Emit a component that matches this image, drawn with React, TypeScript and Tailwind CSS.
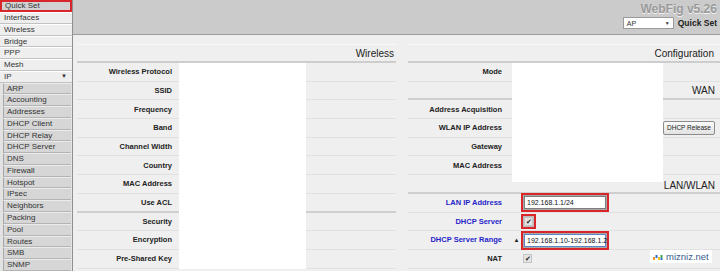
import type { ReactNode } from 'react'

const topItems = ['Interfaces', 'Wireless', 'Bridge', 'PPP', 'Mesh']
const subItems = [
  'ARP', 'Accounting', 'Addresses', 'DHCP Client', 'DHCP Relay', 'DHCP Server', 'DNS', 'Firewall',
  'Hotspot', 'IPsec', 'Neighbors', 'Packing', 'Pool', 'Routes', 'SMB', 'SNMP',
]

const leftRows = [
  'Wireless Protocol', 'SSID', 'Frequency', 'Band', 'Channel Width', 'Country',
  'MAC Address', 'Use ACL', 'Security', 'Encryption', 'Pre-Shared Key',
]

function Sidebar() {
  return (
    <div className="w-[73px] shrink-0 border-r border-[#8f8f8f] bg-[#e2e2e2] text-[8px] text-[#333]">
      <div className="h-[12px] border-2 border-[#d8262b] bg-[#d2d2d2] pl-[3px] leading-[8px]">Quick Set</div>
      {topItems.map((t) => (
        <div key={t} className="h-[11.77px] border-t border-white border-b border-b-[#c2c2c2] bg-[#eeeeee] pl-[4px] leading-[9px]">
          {t}
        </div>
      ))}
      <div className="h-[11.77px] border-t border-white border-b border-b-[#c2c2c2] bg-[#eeeeee] pl-[4px] pr-[5px] leading-[9px] flex justify-between">
        <span>IP</span>
        <span className="text-[6px]">▼</span>
      </div>
      {subItems.map((t) => (
        <div key={t} className="h-[11.77px] ml-[3px] mr-[1px] border-l border-l-[#a8a8a8] border-t border-t-[#ececec] border-b border-b-[#b4b4b4] bg-[#d6d6d6] pl-[3px] leading-[9px]">
          {t}
        </div>
      ))}
    </div>
  )
}

function Header() {
  return (
    <div className="h-[35px] shrink-0 bg-[#cbcbcb] border-b border-[#9c9c9c] flex flex-col items-end pr-[4px] pt-[2px]">
      <div className="text-[12px] font-bold leading-[14px] text-[#9a9a9a] [text-shadow:0_1px_0_#f2f2f2]">WebFig v5.26</div>
      <div className="mt-[1px] flex items-center gap-[4px]">
        <div className="w-[51px] h-[12px] bg-white border border-[#9a9a9a] flex items-center justify-between px-[3px] text-[7px] leading-none">
          <span>AP</span>
          <span className="text-[5px]">▼</span>
        </div>
        <span className="text-[8.5px] font-bold text-[#222]">Quick Set</span>
      </div>
    </div>
  )
}

function Check({ red }: { red?: boolean }) {
  const box = (
    <div className="w-[9px] h-[9px] bg-[#e4e4e4] border border-[#c4c4c4] flex items-center justify-center text-[7px] leading-none text-[#222]">
      ✔
    </div>
  )
  if (!red) return <div className="ml-[11px]">{box}</div>
  return <div className="ml-[9px] border-2 border-[#d8262b] p-[1px] bg-[#bdbdbd]">{box}</div>
}

function Field({ children, focus }: { children: ReactNode; focus?: boolean }) {
  return (
    <div className="border-2 border-[#d8262b] p-[1px] bg-[#a9a9a9]">
      <div
        className={`w-[82px] h-[13px] bg-white border ${focus ? 'border-[#5a86c8]' : 'border-[#7d7d7d]'} flex items-center whitespace-nowrap pl-[2px] text-[7px] leading-none text-[#111]`}
      >
        {children}
      </div>
    </div>
  )
}

interface RRow {
  label: string
  blue?: boolean
  white?: 'full' | 'top'
  extra?: ReactNode
  thick?: boolean
  value?: ReactNode
}

const rightRows: RRow[] = [
  { label: 'Mode', white: 'full' },
  { label: '', white: 'full', extra: <span className="text-[10px] leading-none pb-[2px] text-[#222]">WAN</span>, thick: true },
  { label: 'Address Acquisition', white: 'full' },
  {
    label: 'WLAN IP Address',
    white: 'full',
    extra: (
      <div className="self-center h-[14px] px-[3px] rounded-[2px] border border-[#8c8c8c] bg-gradient-to-b from-[#fbfbfb] to-[#e2e2e2] text-[6.5px] leading-[12px] text-[#222] whitespace-nowrap">
        DHCP Release
      </div>
    ),
  },
  { label: 'Gateway', white: 'full' },
  { label: 'MAC Address', white: 'full' },
  { label: '', white: 'top', extra: <span className="text-[10px] leading-none pb-[1px] text-[#222]">LAN/WLAN</span>, thick: true },
  { label: 'LAN IP Address', blue: true, value: <div className="ml-[9px]"><Field>192.168.1.1/24</Field></div> },
  { label: 'DHCP Server', blue: true, value: <Check red /> },
  {
    label: 'DHCP Server Range',
    blue: true,
    value: (
      <div className="flex items-center">
        <span className="w-[9px] text-[6px] text-[#222] text-center">▲</span>
        <Field focus>
          192.168.1.10-192.168.1.
          <span className="inline-block w-px h-[9px] bg-[#111]" />
          2
        </Field>
      </div>
    ),
  },
  { label: 'NAT', value: <Check /> },
]

export default function App() {
  return (
    <div className="relative w-[720px] h-[271px] overflow-hidden flex bg-[#efefef] font-['Liberation_Sans',Arial,sans-serif] text-[#333]">
      <Sidebar />
      <div className="flex-1 flex flex-col">
        <Header />
        <div className="flex gap-[12px] pl-[4px] pt-[9px]">
          <div className="w-[319px] shrink-0 border-t border-[#f8f8f8]">
            <div className="h-[18px] flex items-end justify-end pr-[2px] pb-[2px] text-[10px] leading-none text-[#222] border-b-2 border-[#cdcdcd]">
              Wireless
            </div>
            {leftRows.map((l, i) => {
              const line = i === 7 ? 'border-b-2 border-[#cfcfcf]' : 'border-b border-[#e1e1e1]'
              return (
                <div key={l} className="flex h-[18.7px]">
                  <div className={`w-[102px] flex items-center justify-end pr-[7px] font-bold text-[7.5px] text-[#222] whitespace-nowrap ${line}`}>{l}</div>
                  <div className="w-[127px] bg-white" />
                  <div className={`flex-1 ${line}`} />
                </div>
              )
            })}
          </div>
          <div className="flex-1 border-t border-[#f8f8f8]">
            <div className="h-[18px] flex items-end justify-end pr-[7px] pb-[2px] text-[10px] leading-none text-[#222] border-b-2 border-[#cdcdcd]">
              Configuration
            </div>
            {rightRows.map((r, i) => {
              const line = r.thick ? 'border-b-2 border-[#cfcfcf]' : 'border-b border-[#e1e1e1]'
              return (
                <div key={i} className="flex h-[18.7px]">
                  <div
                    className={`w-[104px] flex items-center justify-end pr-[10px] font-bold text-[7.5px] whitespace-nowrap ${r.blue ? 'text-[#1f24c8]' : 'text-[#222]'} ${line}`}
                  >
                    {r.label}
                  </div>
                  <div className={`w-[151px] flex items-center ${r.white === 'full' ? 'bg-white' : line} relative`}>
                    {r.white === 'top' && <div className="absolute left-0 top-0 w-full h-[7px] bg-white" />}
                    {r.value}
                  </div>
                  <div className={`flex-1 flex items-end justify-end pr-[6px] ${line}`}>{r.extra}</div>
                </div>
              )
            })}
          </div>
        </div>
      </div>
      <div className="absolute left-[650px] top-[250px] h-[13px] px-[3px] bg-white flex items-center gap-[3px]">
        <svg width="10" height="6" viewBox="0 0 10 6">
          <rect x="0" y="3" width="2" height="3" fill="#f29a1f" />
          <rect x="2.5" y="1" width="2" height="3" fill="#2c6fcf" />
          <rect x="5" y="3" width="2" height="3" fill="#f2c21f" />
          <rect x="7.5" y="1" width="2" height="3" fill="#3aa655" />
          <rect x="7.5" y="4" width="2" height="2" fill="#2c6fcf" />
        </svg>
        <span className="text-[9.5px] leading-none text-[#3a5c8f]">mizniz.net</span>
      </div>
    </div>
  )
}
